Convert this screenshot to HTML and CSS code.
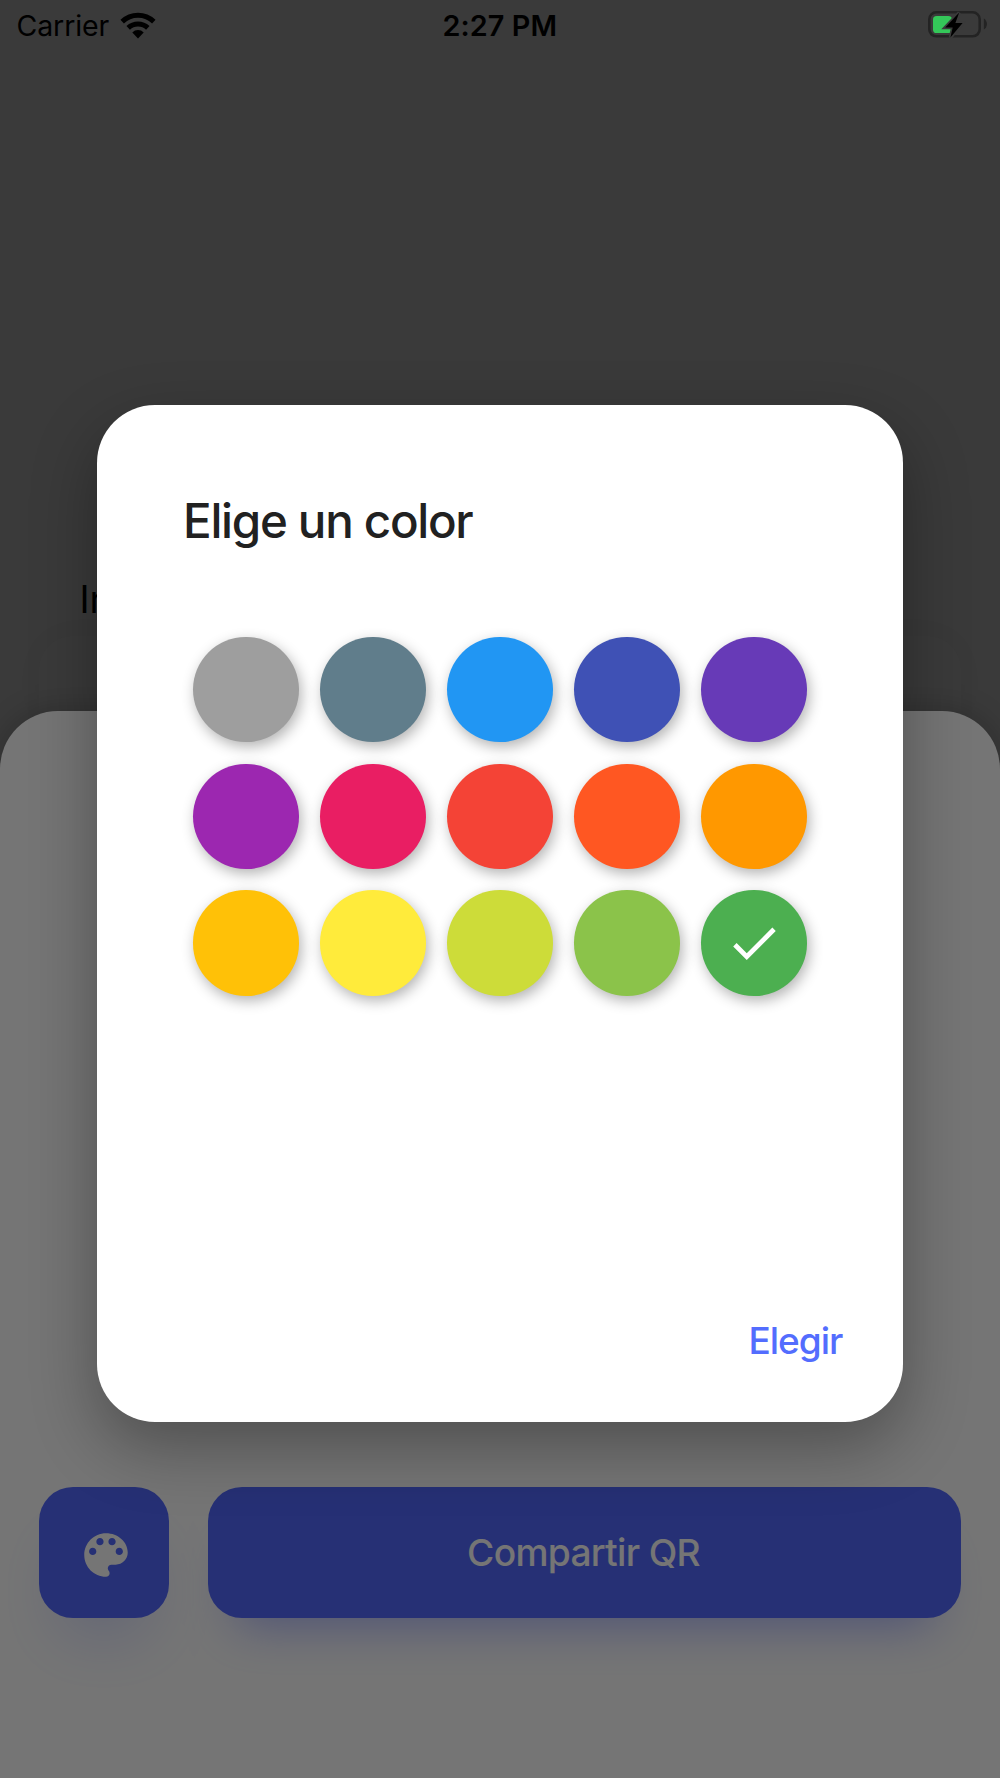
FILE: index.html
```html
<!DOCTYPE html>
<html lang="es">
<head>
<meta charset="utf-8">
<title>Elige un color</title>
<link rel="stylesheet" href="styles.css">
</head>
<body>
<div class="screen">
  <header class="status">
    <div class="carrier">
      <span class="carrier-name">Carrier</span>
      <svg class="wifi" viewBox="0 0 38 28">
        <path d="M19 27.4 13.3 21.4a8.2 8.2 0 0 1 11.4 0z"/>
        <path class="arc" d="M9.2 16.9a14.2 14.2 0 0 1 19.6 0M3.2 10.6a22.8 22.8 0 0 1 31.6 0"/>
      </svg>
    </div>
    <span class="clock">2:27 PM</span>
    <svg class="battery" viewBox="0 0 60 30">
      <rect class="shell" x="1.3" y="2.3" width="50.4" height="24" rx="7"/>
      <path class="nub" d="M55.9 8.6a6.4 6.4 0 0 1 0 10.9z"/>
      <rect class="charge" x="5" y="6" width="19" height="17" rx="3.6"/>
      <path class="bolt" d="M31.200 2.600 17.200 17.600h7.500L22.400 27.600 34.600 13h-7.200z"/>
    </svg>
  </header>

  <main class="page">
    <p class="label">Ingresa</p>
    <div class="field"></div>
    <section class="sheet">
      <div class="actions">
        <button class="btn btn-icon" aria-label="Color">
          <svg class="palette" viewBox="0 0 24 24"><path d="M12 3c-4.970 0-9 4.030-9 9s4.030 9 9 9c.83 0 1.500-.67 1.500-1.500 0-.39-.15-.74-.39-1.010-.23-.26-.38-.61-.38-.99 0-.83.67-1.500 1.500-1.500H16c2.760 0 5-2.240 5-5 0-4.420-4.030-8-9-8zm-5.500 9c-.83 0-1.500-.67-1.500-1.500S5.670 9 6.500 9 8 9.670 8 10.500 7.330 12 6.500 12zm3-4C8.670 8 8 7.330 8 6.500S8.670 5 9.500 5s1.500.67 1.500 1.500S10.330 8 9.500 8zm5 0c-.83 0-1.500-.67-1.500-1.500S13.670 5 14.500 5s1.500.67 1.500 1.500S15.330 8 14.500 8zm3 4c-.83 0-1.500-.67-1.500-1.500S16.670 9 17.500 9s1.500.67 1.500 1.500-.67 1.500-1.500 1.500z"/></svg>
        </button>
        <button class="btn btn-share"><span class="share-text">Compartir QR</span></button>
      </div>
    </section>
  </main>

  <div class="scrim">
    <section class="dialog" role="dialog">
      <h1 class="title">Elige un color</h1>
      <div class="swatches">
        <i class="swatch grey"></i><i class="swatch bluegrey"></i><i class="swatch blue"></i><i class="swatch indigo"></i><i class="swatch deeppurple"></i>
        <i class="swatch purple"></i><i class="swatch pink"></i><i class="swatch red"></i><i class="swatch deeporange"></i><i class="swatch orange"></i>
        <i class="swatch amber"></i><i class="swatch yellow"></i><i class="swatch lime"></i><i class="swatch lightgreen"></i><i class="swatch green"><svg class="check" viewBox="0 0 24 24"><path d="M9 16.200 4.800 12l-1.400 1.400L9 19 21 7l-1.400-1.400z"/></svg></i>
      </div>
      <button class="choose">Elegir</button>
    </section>
  </div>
</div>
</body>
</html>
```
FILE: styles.css
```css
* { box-sizing: border-box; }

body {
  margin: 0;
  font-family: Inter, "Liberation Sans", sans-serif;
}

button {
  border: 0;
  padding: 0;
  background: none;
  font: inherit;
}

.screen {
  position: relative;
  width: 1000px;
  height: 1778px;
  overflow: hidden;
  display: flex;
  flex-direction: column;
  background: #7e7e7e;
}

/* Status bar stays above the dimmed page */
.status {
  position: relative;
  z-index: 2;
  display: grid;
  grid-template-columns: 1fr auto 1fr;
  align-items: center;
  height: 50px;
  padding: 1px 12px 0 16.500px;
  color: #000;
}

.carrier {
  display: flex;
  align-items: center;
  gap: 10px;
}

.carrier-name {
  font-size: 28.5px;
  line-height: 50px;
  letter-spacing: -0.1px;
}

.wifi {
  width: 38px;
  height: 28px;
  margin-top: -3px;
}

.wifi .arc {
  fill: none;
  stroke: #000;
  stroke-width: 5;
}

.clock {
  margin-left: -5px;
  font-size: 28.8px;
  font-weight: 600;
  line-height: 50px;
  letter-spacing: 0.1px;
}

.battery {
  justify-self: end;
  width: 60px;
  height: 30px;
  margin-top: -2px;
}

.shell {
  fill: none;
  stroke: #232323;
  stroke-width: 2.6;
}

.nub { fill: #232323; }
.charge { fill: #34c759; }

.bolt {
  stroke: #3a3a3a;
  stroke-width: 3.4;
  paint-order: stroke;
}

.page {
  flex: 1;
  display: flex;
  flex-direction: column;
  padding-top: 525px;
}

.label {
  margin: 0 0 0 79.500px;
  font-size: 37.5px;
  line-height: 50px;
}

.field {
  height: 75px;
  margin: 11px 39px 0;
  border-radius: 34px 34px 0 0;
  background: #7f7f7f;
  box-shadow: 0 0 30px rgba(0, 0, 0, .03);
}

.sheet {
  position: relative;
  flex: 1;
  display: flex;
  flex-direction: column;
  justify-content: flex-end;
  padding: 0 38.600px 160.500px;
  border-radius: 58px 58px 0 0;
  background: #fff;
  box-shadow: 0 0 30px rgba(0, 0, 0, .22);
}

.actions {
  display: flex;
  gap: 38.600px;
}

.btn {
  display: flex;
  align-items: center;
  justify-content: center;
  height: 130.400px;
  border-radius: 34px;
  background: #5369fe;
  color: #fff;
}

.btn-icon {
  width: 130.400px;
  padding: 5px 0 0 5px;
  box-shadow: 0 38px 64px -24px rgba(83, 104, 254, .26);
}

.btn-share {
  flex: 1;
  box-shadow: 0 36px 48px -29px rgba(83, 104, 254, .5);
}

.palette {
  width: 58px;
  height: 58px;
  fill: #fff;
}

.share-text {
  margin-left: -2px;
  font-size: 37.200px;
  font-weight: 500;
  letter-spacing: -0.7px;
}

.scrim {
  position: absolute;
  inset: 0;
  z-index: 1;
  display: flex;
  align-items: center;
  justify-content: center;
  padding-top: 48px;
  background: rgba(0, 0, 0, .54);
}

.dialog {
  display: flex;
  flex-direction: column;
  width: 806.800px;
  height: 1017px;
  padding: 86px 61px 51px 86.500px;
  border-radius: 58px;
  background: #fff;
  box-shadow: 0 25px 66px rgba(0, 0, 0, .32);
}

.title {
  margin: 0;
  font-size: 47.500px;
  font-weight: 450;
  line-height: 60px;
  letter-spacing: -1.300px;
  color: #212121;
}

.swatches {
  display: grid;
  grid-template-columns: repeat(5, 105.200px);
  column-gap: 21.800px;
  row-gap: 21.500px;
  margin: 86.500px 0 0 10.400px;
}

.swatch {
  display: flex;
  align-items: center;
  justify-content: center;
  height: 105.200px;
  border-radius: 50%;
  box-shadow: 2.400px 4.800px 14px rgba(0, 0, 0, .3);
}

.grey { background: #9e9e9e; }
.bluegrey { background: #607d8b; }
.blue { background: #2196f3; }
.indigo { background: #3f51b5; }
.deeppurple { background: #673ab7; }
.purple { background: #9c27b0; }
.pink { background: #e91e63; }
.red { background: #f44336; }
.deeporange { background: #ff5722; }
.orange { background: #ff9800; }
.amber { background: #ffc107; }
.yellow { background: #ffeb3b; }
.lime { background: #cddc39; }
.lightgreen { background: #8bc34a; }
.green { background: #4caf50; }

.check {
  width: 58px;
  height: 58px;
  fill: #fff;
}

.choose {
  align-self: flex-end;
  margin-top: auto;
  font-size: 37px;
  line-height: 60px;
  font-weight: 500;
  letter-spacing: -1px;
  color: #536dfe;
}
```
